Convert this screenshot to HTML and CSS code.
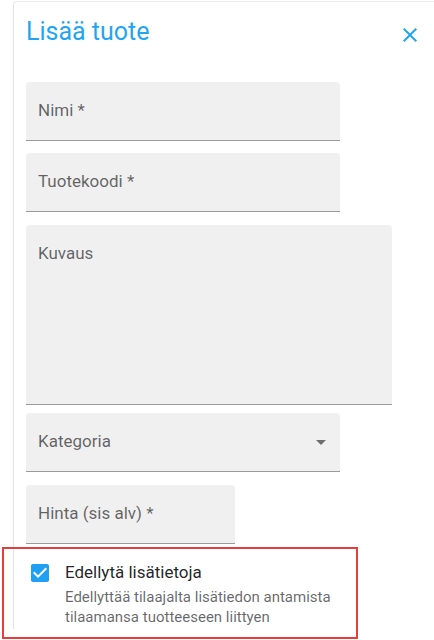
FILE: index.html
```html
<!DOCTYPE html>
<html lang="fi">
<head>
<meta charset="utf-8">
<title>Lisää tuote</title>
<link rel="stylesheet" href="styles.css">
</head>
<body>
<div class="panel">
  <div class="header">
    <h2 class="title">Lisää tuote</h2>
    <button class="close" aria-label="Sulje">
      <svg viewBox="0 0 24 24" width="24" height="24"><path d="M19 6.41 17.59 5 12 10.59 6.41 5 5 6.41 10.59 12 5 17.59 6.41 19 12 13.41 17.59 19 19 17.59 13.41 12z"/></svg>
    </button>
  </div>
  <div class="form">
    <div class="field field-md f-name"><span class="label">Nimi *</span></div>
    <div class="field field-md f-code"><span class="label">Tuotekoodi *</span></div>
    <div class="field field-lg f-desc"><span class="label">Kuvaus</span></div>
    <div class="field field-md f-cat select"><span class="label">Kategoria</span>
      <svg class="arrow" viewBox="0 0 24 24" width="24" height="24"><path d="M7 10l5 5 5-5z"/></svg>
    </div>
    <div class="field field-sm f-price"><span class="label">Hinta (sis alv) *</span></div>
    <div class="check-row">
      <svg class="checkbox" viewBox="0 0 24 24" width="24" height="24"><path d="M19 3H5c-1.11 0-2 .9-2 2v14c0 1.1.89 2 2 2h14c1.11 0 2-.9 2-2V5c0-1.1-.89-2-2-2zm-9 14l-5-5 1.41-1.41L10 14.17l7.59-7.59L19 8l-9 9z"/></svg>
      <div class="check-text">
        <div class="check-label">Edellytä lisätietoja</div>
        <div class="check-help">Edellyttää tilaajalta lisätiedon antamista tilaamansa tuotteeseen liittyen</div>
      </div>
    </div>
  </div>
</div>
<div class="highlight"></div>
</body>
</html>
```
FILE: styles.css
```css
html, body {
  margin: 0;
  padding: 0;
  background: #ffffff;
  overflow: hidden;
  height: 640px;
}
body {
  font-family: Roboto, "Liberation Sans", Arial, sans-serif;
  position: relative;
}
.panel {
  margin-left: 13px;
  margin-top: 1px;
  height: 628px;
  box-sizing: border-box;
  border-left: 1px solid #e4e4e4;
  border-top: 1px solid #ececec;
  border-top-left-radius: 4px;
  padding-left: 12px;
}
.header {
  display: flex;
  align-items: flex-start;
  justify-content: space-between;
  width: 396px;
}
.title {
  margin: 14px 0 0 0;
  font-size: 25px;
  font-weight: 400;
  line-height: 32px;
  color: #1fa6f2;
}
.close {
  margin: 21px 0 0 0;
  padding: 0;
  border: 0;
  background: transparent;
  width: 24px;
  height: 24px;
  display: block;
}
.close svg {
  display: block;
  fill: #1fa6f2;
}
.form {
  display: flex;
  flex-direction: column;
  align-items: flex-start;
  margin-top: 34px;
}
.field {
  position: relative;
  box-sizing: border-box;
  background: #f0f0f0;
  border-radius: 4px 4px 0 0;
  border-bottom: 1px solid #9a9a9a;
  padding: 20px 12px 0 12px;
  height: 59px;
}
.field-md { width: 314px; }
.field-lg { width: 366px; height: 180px; }
.field-sm { width: 209px; }
.label {
  display: block;
  font-size: 17px;
  line-height: 17px;
  color: rgba(0, 0, 0, 0.6);
}
.f-code { margin-top: 12px; }
.f-desc { margin-top: 13px; }
.f-cat { margin-top: 8px; }
.f-price { margin-top: 13px; }
.select .arrow {
  position: absolute;
  right: 7px;
  top: 17px;
  fill: rgba(0, 0, 0, 0.54);
}
.check-row {
  display: flex;
  align-items: flex-start;
  margin-top: 16px;
  margin-left: 2px;
}
.checkbox {
  display: block;
  fill: #1fa0f2;
  margin-top: 1px;
  flex: none;
}
.check-text {
  margin-left: 13px;
  width: 285px;
}
.check-label {
  font-size: 17px;
  line-height: 24px;
  color: rgba(0, 0, 0, 0.87);
}
.check-help {
  margin-top: 3px;
  font-size: 15px;
  line-height: 20px;
  color: rgba(0, 0, 0, 0.6);
}
.highlight {
  position: absolute;
  left: 2px;
  top: 547px;
  width: 356px;
  height: 92px;
  box-sizing: border-box;
  border: 2px solid #e53e3e;
  pointer-events: none;
}
```
